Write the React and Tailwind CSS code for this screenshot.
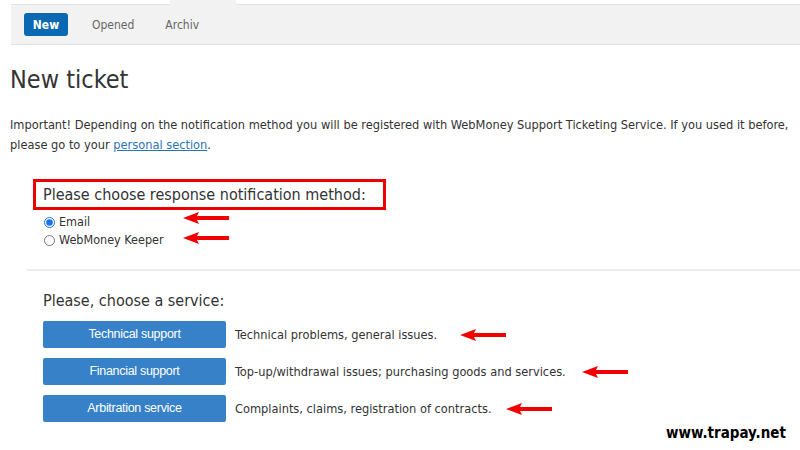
import React from "react";

const Arrow = ({ className, style }) => (
  <svg className={className} style={style} width="46" height="12" viewBox="0 0 46 12">
    <polygon points="0,6 16,0 14,4 46,4 46,8 14,8 16,12" fill="#f00000" />
  </svg>
);

export default function App() {
  const font = { fontFamily: '"DejaVu Sans", Verdana, sans-serif' };
  return (
    <div className="relative w-[800px] h-[450px] bg-white overflow-hidden text-[#333] font-stretch-condensed" style={font}>
      {/* tab strip */}
      <div className="flex h-[5px] pl-[11px]">
        <div className="w-[159px] border-b border-[#e3e3e3]" />
        <div className="w-[66px] bg-[#f2f2f2]" />
        <div className="flex-1 border-b border-[#e3e3e3]" />
      </div>
      {/* nav bar */}
      <div className="ml-[11px] h-[40px] bg-[#f2f2f2] border-b border-[#e0e0e0] flex items-center pl-[13px] text-[12px]">
        <div className="w-[44px] h-[23px] rounded-[3px] bg-[#0b68b3] text-white font-bold flex items-center justify-center">New</div>
        <div className="ml-[24px] text-[#666]">Opened</div>
        <div className="ml-[31px] text-[#666]">Archiv</div>
      </div>

      <h1 className="ml-[10px] mt-[20px] text-[25px] leading-[30px] text-[#333]">New ticket</h1>

      <p className="ml-[10px] mt-[20px] text-[12.7px] leading-[20px] text-[#333] whitespace-nowrap">
        Important! Depending on the notification method you will be registered with WebMoney Support Ticketing Service. If you used it before,
        <br />
        please go to your <span className="text-[#2a74b8] underline">personal section</span>.
      </p>

      <div className="relative ml-[33px] mt-[24px] w-[353px] h-[31px] border-[3px] border-[#ee0000] flex items-center pl-[7px] text-[16px]">
        Please choose response notification method:
      </div>

      <div className="relative ml-[44px] mt-[5px] text-[12.5px] flex flex-col gap-[3px]">
        <label className="flex items-center gap-[4px] h-[15px]">
          <input type="radio" name="m" defaultChecked className="w-[11px] h-[11px] m-0 accent-[#1a73e8]" />
          <span>Email</span>
        </label>
        <label className="flex items-center gap-[4px] h-[15px]">
          <input type="radio" name="m" className="w-[11px] h-[11px] m-0" />
          <span>WebMoney Keeper</span>
        </label>
        <Arrow className="absolute left-[139px] top-[-3px]" />
        <Arrow className="absolute left-[139px] top-[17px]" />
      </div>

      <div className="ml-[27px] mt-[21px] border-t-2 border-[#ececec]" />

      <div className="ml-[43px] mt-[20px] text-[16px] leading-[20px]">Please, choose a service:</div>

      <div className="ml-[43px] mt-[10px] flex flex-col gap-[10px] text-[12.7px]">
        {[
          ["Technical support", "Technical problems, general issues.", 417],
          ["Financial support", "Top-up/withdrawal issues; purchasing goods and services.", 539],
          ["Arbitration service", "Complaints, claims, registration of contracts.", 463],
        ].map(([b, d, ax]) => (
          <div key={b} className="relative flex items-center h-[27px]">
            <div className="w-[183px] h-[27px] rounded-[2px] bg-[#3781c8] text-white flex items-center justify-center tracking-[-0.3px]" style={{ fontFamily: '"Liberation Sans", Arial, sans-serif', fontSize: 12.5 }}>
              {b}
            </div>
            <span className="ml-[9px]">{d}</span>
            <Arrow className="absolute top-[8px]" style={{ left: ax }} />
          </div>
        ))}
      </div>

      <div className="absolute left-[666px] top-[422px] text-[15px] font-bold text-black">www.trapay.net</div>
    </div>
  );
}
